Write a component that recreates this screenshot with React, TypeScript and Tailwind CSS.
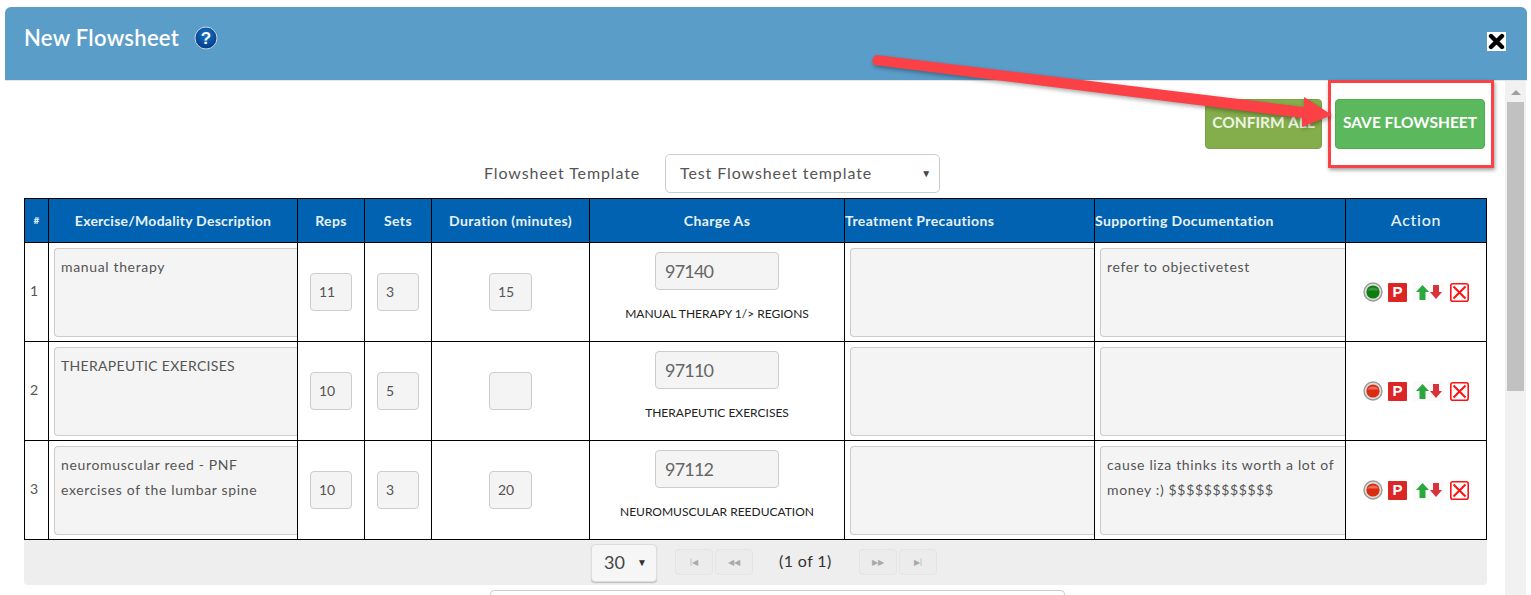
import React from 'react';

const FONT = "font-['Lato','Noto_Sans',sans-serif]";

type Row = {
  n: number;
  desc: string;
  descCaps?: boolean;
  reps: string;
  sets: string;
  duration: string;
  code: string;
  charge: string;
  support: string;
  on: boolean;
};

const rows: Row[] = [
  { n: 1, desc: 'manual therapy', reps: '11', sets: '3', duration: '15', code: '97140', charge: 'MANUAL THERAPY 1/> REGIONS', support: 'refer to objectivetest', on: true },
  { n: 2, desc: 'THERAPEUTIC EXERCISES', descCaps: true, reps: '10', sets: '5', duration: '', code: '97110', charge: 'THERAPEUTIC EXERCISES', support: '', on: false },
  { n: 3, desc: 'neuromuscular reed - PNF exercises of the lumbar spine', reps: '10', sets: '3', duration: '20', code: '97112', charge: 'NEUROMUSCULAR REEDUCATION', support: 'cause liza thinks its worth a lot of money :) $$$$$$$$$$$$', on: false },
];

function Area({ text, caps }: { text: string; caps?: boolean }) {
  return (
    <div className={`h-[89px] w-full rounded-l border border-r-0 border-[#ccc] bg-[#f4f4f4] pl-[6px] pr-1 pt-[5px] text-[14px] leading-[25px] text-[#555] ${caps ? 'tracking-[0.3px]' : 'tracking-[0.65px]'}`}>
      {text}
    </div>
  );
}

function SmallInput({ value, wide }: { value: string; wide?: boolean }) {
  return (
    <div className={`mx-auto flex h-[38px] items-center rounded border border-[#ccc] bg-[#f4f4f4] pb-[1px] pl-[8px] text-[14px] text-[#555] ${wide ? 'w-[43px]' : 'w-[42px]'}`}>
      {value}
    </div>
  );
}

function RowActions({ on }: { on: boolean }) {
  return (
    <div className="flex items-center justify-center">
      <svg width="20" height="20" viewBox="0 0 20 20">
        <circle cx="10" cy="10" r="9" fill="#ddd" stroke="#999" strokeWidth="1.4" />
        <circle cx="10" cy="10" r="6.600" fill={on ? '#0c7d0c' : '#d92c10'} />
        <path d="M4.500 8.500a5.800 4.500 0 0 1 11 0z" fill={on ? '#3a9a3a' : '#ee6a5a'} />
      </svg>
      <div className="ml-[5px] flex h-[19px] w-[19px] items-center justify-center rounded-[1px] bg-[#dc2626] font-['Liberation_Sans',sans-serif] text-[15px] font-bold text-white">P</div>
      <svg className="ml-[6px]" width="31" height="20" viewBox="0 0 31 20">
        <rect width="31" height="20" fill="#fafafa" />
        <path d="M9.500 3l6.500 7h-3.500v8h-6v-8H3z" fill="#2aa83e" />
        <path d="M23 17l-6-7h3V3h6v7h3z" fill="#d8323c" />
      </svg>
      <svg className="ml-[6px]" width="19" height="19" viewBox="0 0 19 19" fill="none" stroke="#f11">
        <rect x="0.800" y="0.800" width="17.400" height="17.400" rx="2" strokeWidth="1.600" />
        <path d="M3.500 3.500l12 12M15.500 3.500l-12 12" strokeWidth="2" />
      </svg>
    </div>
  );
}

function PageBtn({ glyph }: { glyph: React.ReactNode }) {
  return (
    <div className="flex h-[26px] w-[38px] items-center justify-center rounded border border-[#e4e4e4] bg-[#ececec] text-[#aaa]">
      {glyph}
    </div>
  );
}

const headCell = 'border border-black bg-[#0062b1] px-0 text-[14px] font-bold tracking-[0.4px] text-[#e8f1f8]';
const bodyCell = 'border border-black p-0 align-middle';

export default function App() {
  return (
    <div className={`relative h-[595px] w-[1531px] overflow-hidden bg-white ${FONT}`}>
      <div className="ml-[5px] mr-[4px] pt-[7px]">
        <div className="flex h-[74px] items-start justify-between rounded-t-[6px] border-b border-[#e5e5e5] bg-[#5b9dc9] pl-[19px] pr-[21px]">
          <div className="flex items-center gap-[15px] pt-[18px]">
            <span className="text-[22px] font-semibold leading-[26px] tracking-[0.3px] text-white">New Flowsheet</span>
            <svg width="24" height="24" viewBox="0 0 24 24">
              <defs>
                <radialGradient id="helpBg" cx="50%" cy="35%" r="70%">
                  <stop offset="0%" stopColor="#1a73c8" />
                  <stop offset="100%" stopColor="#00367f" />
                </radialGradient>
              </defs>
              <circle cx="12" cy="12" r="11" fill="url(#helpBg)" stroke="#c9d5e2" strokeWidth="1" />
              <text x="12" y="18" textAnchor="middle" fontSize="17" fontWeight="700" fontFamily="Liberation Sans, sans-serif" fill="#fff">?</text>
            </svg>
          </div>
          <div className="mt-[25px] flex h-[19px] w-[19px] items-center justify-center bg-white">
            <svg width="17" height="17" viewBox="0 0 17 17">
              <path d="M3 3l11 11M14 3L3 14" stroke="#000" strokeWidth="4.400" strokeLinecap="round" />
            </svg>
          </div>
        </div>

        <div className="flex">
          <div className="w-[1500px] pl-[19px]">
            <div className="flex justify-end gap-[13px] pr-[20px] pt-[18px]">
              <button className="h-[50px] w-[117px] rounded border border-[#7aa344] bg-[#84ad4b] pb-[2px] text-[15.5px] font-bold text-[#eef4e4]">CONFIRM ALL</button>
              <button className="h-[50px] w-[150px] rounded border border-[#4cae4c] bg-[#5cb85c] pb-[2px] text-[15.5px] font-bold text-white">SAVE FLOWSHEET</button>
            </div>

            <div className="mt-[5px] flex h-[39px] items-center pl-[460px] text-[16px] tracking-[0.9px] text-[#555]">
              <span className="w-[181px] pb-[1px]">Flowsheet Template</span>
              <div className="flex h-[39px] w-[275px] items-center justify-between rounded-[5px] border border-[#ccc] pb-[1px] pl-[14px] pr-[7px]">
                <span>Test Flowsheet template</span>
                <span className="text-[10px] text-[#444]">▼</span>
              </div>
            </div>

            <table className="mt-[5px] w-[1463px] table-fixed border-collapse">
              <colgroup>
                <col className="w-[24px]" />
                <col className="w-[249px]" />
                <col className="w-[67px]" />
                <col className="w-[67px]" />
                <col className="w-[158px]" />
                <col className="w-[255px]" />
                <col className="w-[250px]" />
                <col className="w-[251px]" />
                <col className="w-[141px]" />
              </colgroup>
              <thead>
                <tr className="h-[44px]">
                  <th className={`${headCell} !text-[10px]`}>#</th>
                  <th className={`${headCell} !tracking-[0.25px]`}>Exercise/Modality Description</th>
                  <th className={headCell}>Reps</th>
                  <th className={headCell}>Sets</th>
                  <th className={headCell}>Duration (minutes)</th>
                  <th className={headCell}>Charge As</th>
                  <th className={`${headCell} text-left`}>Treatment Precautions</th>
                  <th className={`${headCell} text-left`}>Supporting Documentation</th>
                  <th className={`${headCell} pb-[2px] !text-[16px] !font-medium !tracking-[0.7px]`}>Action</th>
                </tr>
              </thead>
              <tbody>
                {rows.map((r) => (
                  <tr key={r.n} className="h-[99px]">
                    <td className={`${bodyCell} pb-[4px] pl-[5px] text-[14px] text-[#555]`}>{r.n}</td>
                    <td className={`${bodyCell} pl-[5px]`}><Area text={r.desc} caps={r.descCaps} /></td>
                    <td className={bodyCell}><SmallInput value={r.reps} /></td>
                    <td className={bodyCell}><SmallInput value={r.sets} /></td>
                    <td className={bodyCell}><SmallInput value={r.duration} wide /></td>
                    <td className="border border-black p-0 pt-[9px] text-center align-top">
                      <div className="mx-auto flex h-[38px] w-[124px] items-center rounded border border-[#ccc] bg-[#f4f4f4] pl-[9px] text-[18px] tracking-[-0.8px] text-[#666]">{r.code}</div>
                      <div className="mt-[15px] text-[12px] text-[#222]">{r.charge}</div>
                    </td>
                    <td className={`${bodyCell} pl-[5px]`}><Area text="" /></td>
                    <td className={`${bodyCell} pl-[5px]`}><Area text={r.support} /></td>
                    <td className={bodyCell}><RowActions on={r.on} /></td>
                  </tr>
                ))}
              </tbody>
            </table>

            <div className="flex h-[45px] w-[1463px] items-center rounded-b bg-[#eeeeee] pl-[567px] text-[#333]">
              <div className="flex h-[38px] w-[66px] items-center justify-between rounded border border-[#ddd] bg-[#f6f6f6] pl-[12px] pr-[9px] text-[18px] text-[#444] shadow-[0_1px_1px_#bbb]">
                <span>30</span>
                <span className="text-[10px] text-[#333]">▼</span>
              </div>
              <div className="mb-[2px] ml-[18px] flex gap-[2px]">
                <PageBtn glyph={<span className="text-[8px]">|◀</span>} />
                <PageBtn glyph={<span className="text-[8px]">◀◀</span>} />
              </div>
              <span className="mb-[3px] ml-[26px] w-[80px] text-[16px] tracking-[0.4px]">(1 of 1)</span>
              <div className="mb-[2px] flex gap-[2px]">
                <PageBtn glyph={<span className="text-[8px]">▶▶</span>} />
                <PageBtn glyph={<span className="text-[8px]">▶|</span>} />
              </div>
            </div>

            <div className="ml-[466px] mt-[5px] h-[30px] w-[575px] rounded border border-[#ccc] bg-white" />
          </div>

          <div className="h-[520px] w-[21px] bg-[#f1f1f1] pl-[2px] pt-[9px]">
            <div className="mb-[7px] ml-[4px] h-0 w-0 border-x-[5px] border-b-[5px] border-x-transparent border-b-[#a0a0a0]" />
            <div className="h-[289px] w-[17px] bg-[#c1c1c1]" />
          </div>
        </div>
      </div>

      {/* callout drawn over the page */}
      <div className="absolute left-[1328px] top-[80px] h-[88px] w-[166px] border-[3px] border-[#fb4146] shadow-[1px_2px_4px_rgba(0,0,0,0.4)]" />
      <svg className="absolute left-0 top-0" width="1531" height="595" viewBox="0 0 1531 595">
        <path
          d="M876 55 L1304 107 L1304 97 L1332 115 L1302 127 L1302 118 L874 65 Q870 59 876 55 Z"
          fill="#fb4146"
          style={{ filter: 'drop-shadow(1px 2px 2px rgba(0,0,0,0.35))' }}
        />
      </svg>
    </div>
  );
}
